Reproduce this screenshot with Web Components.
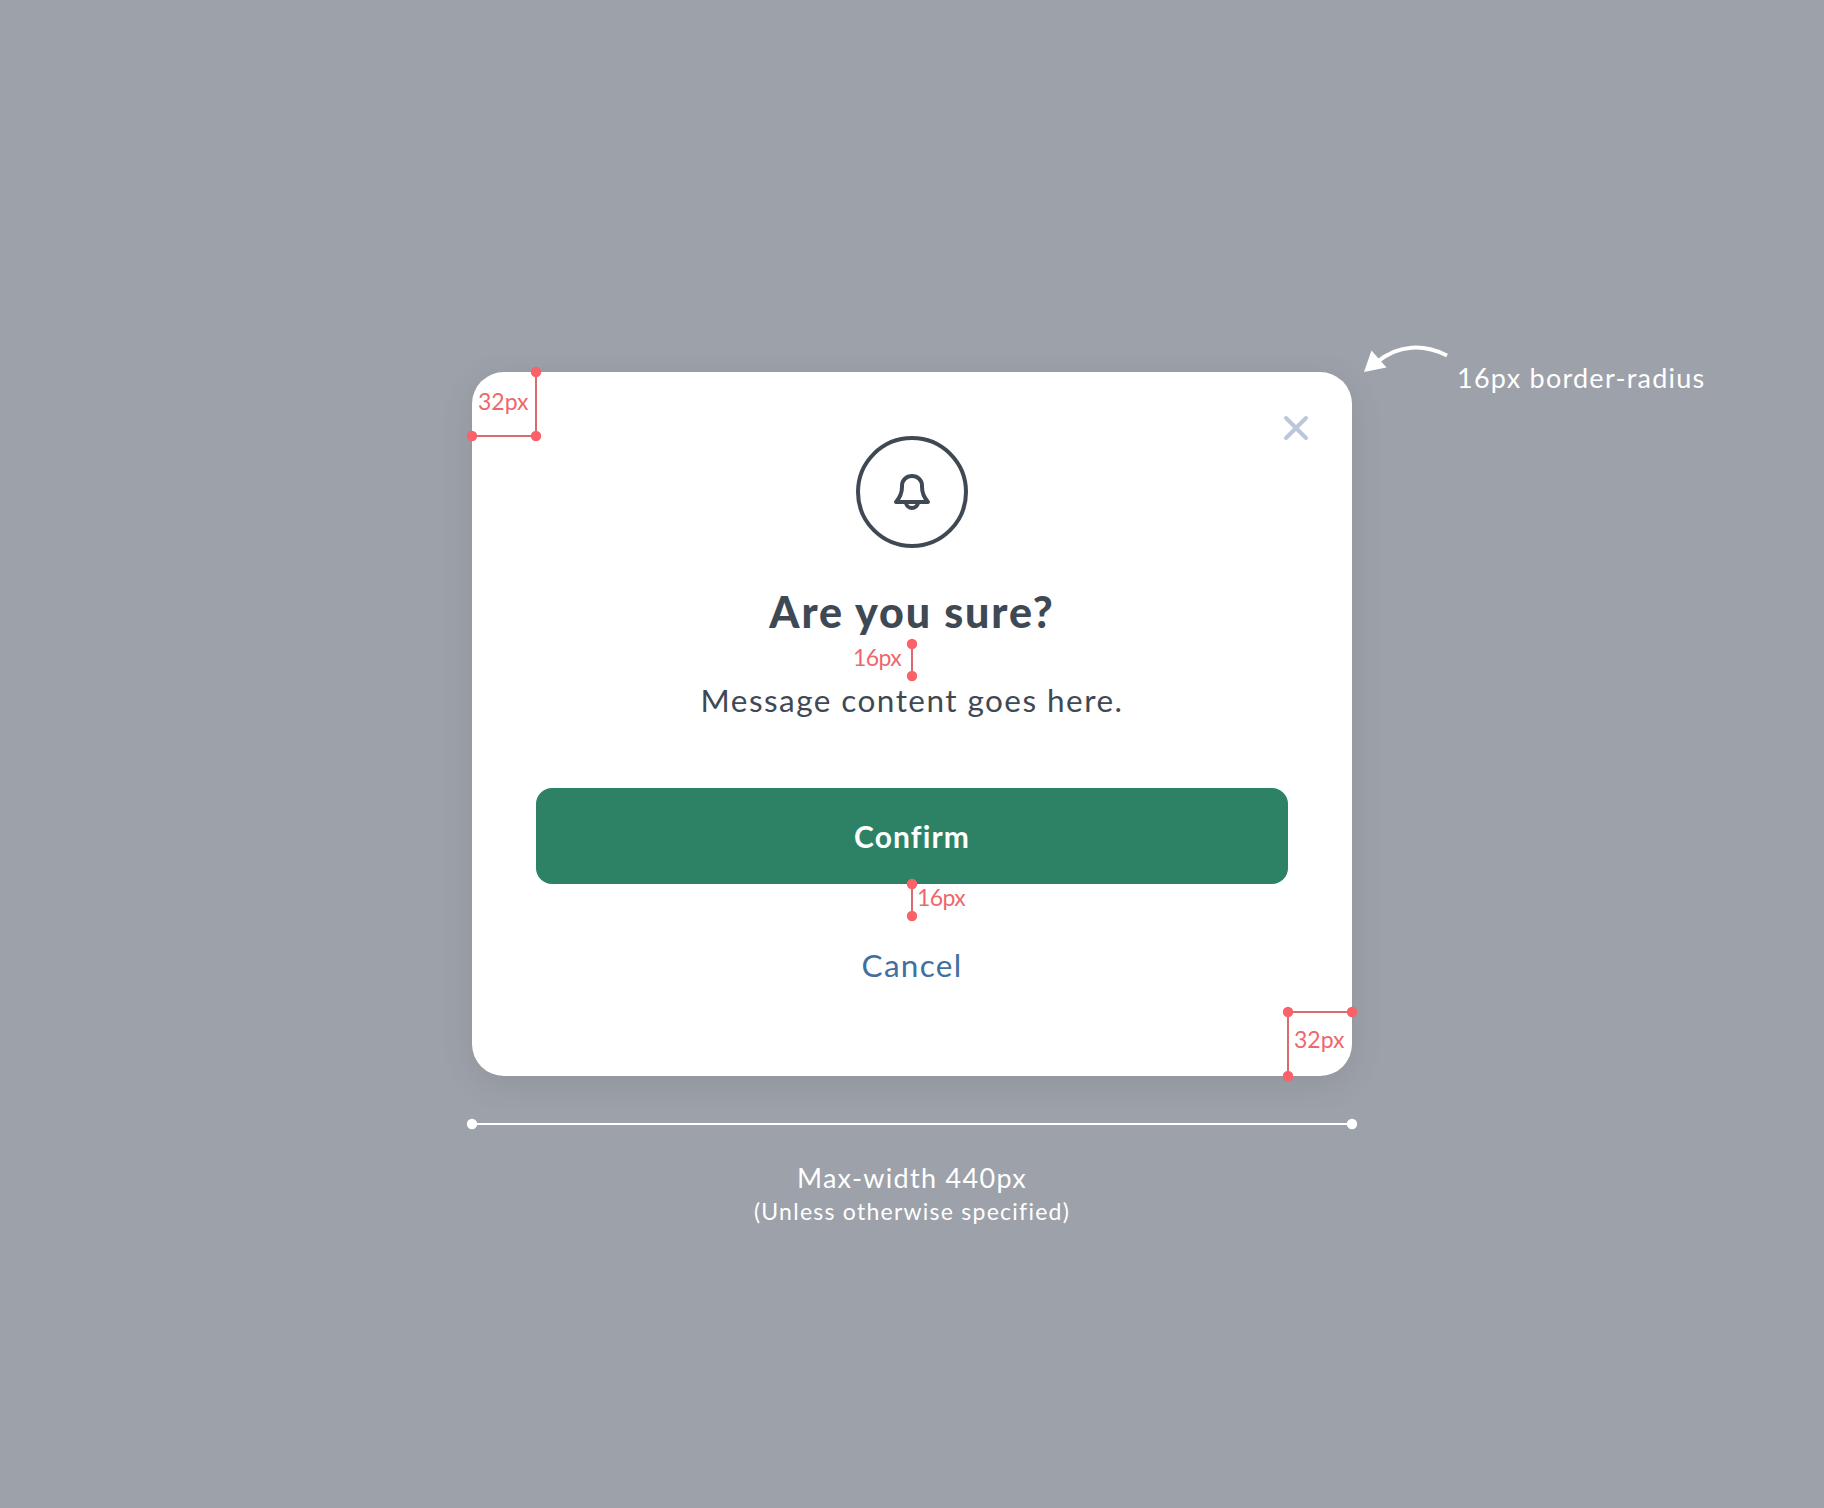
<!DOCTYPE html>
<html lang="en">
<head>
<meta charset="utf-8">
<title>Modal</title>
<style>
  body{
    margin: 0;
    background-color: #9da1a9;
    color: #3f4954;
    font-family: Lato, "Open Sans", sans-serif;
    --ink: #3f4954;
    --green: #2d8265;
    --blue: #41709f;
    --dot: #fa6168;
    --line: #dc6b71;
    --label: #ee676d;
  }
</style>
</head>
<body>
<modal-spec>
  <modal-dialog>
    <bell-icon slot="icon"></bell-icon>
    <span slot="title">Are you sure?</span>
    <span slot="message">Message content goes here.</span>
    <modal-button slot="actions" kind="primary">Confirm</modal-button>
    <modal-button slot="actions" kind="link">Cancel</modal-button>
  </modal-dialog>
  <red-line slot="marks" points="64,0 64,64 0,64" label="32px" lx="6" base="38" style="left:0;top:0"></red-line>
  <red-line slot="marks" points="0,0 0,32" label="16px" lx="-59" base="22" style="left:440px;top:272px;letter-spacing:-.6px"></red-line>
  <red-line slot="marks" points="0,0 0,32" label="16px" lx="5" base="22" style="left:440px;top:512px;letter-spacing:-.6px"></red-line>
  <red-line slot="marks" points="64,0 0,0 0,64" label="32px" lx="6" base="36" style="left:816px;top:640px"></red-line>
  <radius-note slot="marks">16px border-radius</radius-note>
  <width-rule slot="width">
    Max-width 440px
    <span slot="note">(Unless otherwise specified)</span>
  </width-rule>
</modal-spec>
<script>
(function(customElements){
  'use strict';

  class ModalSpec extends HTMLElement{
    constructor(){
      super();
      this.attachShadow({mode: 'open'}).innerHTML = `<style>
        :host{
          display: flex;
          flex-direction: column;
          align-items: center;
          box-sizing: border-box;
          height: 1508px;
          padding-top: 372px;
          overflow: hidden;
        }
        .stage{
          position: relative;
          width: 880px;
        }
        </style>
        <div class="stage"><slot></slot><slot name="marks"></slot></div>
        <slot name="width"></slot>`;
    }
  }

  class ModalDialog extends HTMLElement{
    constructor(){
      super();
      this.attachShadow({mode: 'open'}).innerHTML = `<style>
        :host{
          display: flex;
          flex-direction: column;
          align-items: center;
          box-sizing: border-box;
          height: 704px;
          padding: 64px;
          border-radius: 32px;
          background-color: #fff;
          box-shadow: 0 8px 32px rgba(60, 66, 72, .13);
          position: relative;
        }
        h1{
          margin: 32px 0;
          font-size: 43px;
          line-height: 64px;
          font-weight: 900;
          letter-spacing: 1.9px;
          white-space: nowrap;
        }
        p{
          margin: 0 0 64px;
          font-size: 31.500px;
          line-height: 48px;
          letter-spacing: 1.45px;
          white-space: nowrap;
        }
        .actions{
          display: flex;
          flex-direction: column;
          gap: 32px;
          width: 100%;
        }
        .close{
          position: absolute;
          top: 42px;
          right: 42px;
        }
        </style>
        <svg class="close" width="28" height="28" viewBox="0 0 28 28" fill="none" stroke="#bcc8da" stroke-width="4" stroke-linecap="round">
          <path d="M4 4l20 20M24 4L4 24"/>
        </svg>
        <slot name="icon"></slot>
        <h1><slot name="title"></slot></h1>
        <p><slot name="message"></slot></p>
        <div class="actions"><slot name="actions"></slot></div>`;
    }
  }

  class BellIcon extends HTMLElement{
    constructor(){
      super();
      this.attachShadow({mode: 'open'}).innerHTML = `<style>
        :host{ display: block; width: 112px; height: 112px; }
        svg{ display: block; }
        </style>
        <svg width="112" height="112" viewBox="0 0 112 112" fill="none" stroke="var(--ink)" stroke-width="4" stroke-linejoin="round">
          <circle cx="56" cy="56" r="54"/>
          <path d="M40 66c3.500-4 6-9.500 6-15v-1.500C46 44 50.500 40 56 40s10 4 10 9.500V51c0 5.500 2.500 11 6 15z"/>
          <path d="M50 66.500a6 5.500 0 0 0 12 0"/>
        </svg>`;
    }
  }

  class ModalButton extends HTMLElement{
    constructor(){
      super();
      this.attachShadow({mode: 'open'}).innerHTML = `<style>
        :host{ display: block; }
        button{
          display: block;
          box-sizing: border-box;
          width: 100%;
          height: 96px;
          padding: 2px 0 0;
          border: 0;
          border-radius: 16px;
          background: none;
          font-family: inherit;
          font-size: 31.500px;
          letter-spacing: 1.3px;
          color: var(--blue);
        }
        :host([kind=primary]) button{
          padding-top: 0;
          background-color: var(--green);
          color: #fff;
          font-size: 30px;
          font-weight: 700;
          letter-spacing: 1.1px;
          font-variant-ligatures: none;
        }
        </style>
        <button type="button"><slot></slot></button>`;
    }
  }

  // Measuring line: points are relative to the host, one dot for each
  class RedLine extends HTMLElement{
    constructor(){
      super();
      const points = this.getAttribute('points');
      const dots = points.split(' ').map(p => {
        const [x, y] = p.split(',');
        return `<circle cx="${x}" cy="${y}" r="5.200" fill="var(--dot)"/>`;
      }).join('');

      this.attachShadow({mode: 'open'}).innerHTML = `<style>
        :host{ position: absolute; width: 64px; height: 64px; }
        svg{ display: block; overflow: visible; }
        span{
          position: absolute;
          left: ${this.getAttribute('lx')}px;
          top: ${this.getAttribute('base') - 24}px;
          font-size: 23px;
          line-height: 30px;
          color: var(--label);
        }
        </style>
        <svg width="64" height="64">
          <polyline points="${points}" fill="none" stroke="var(--line)" stroke-width="2"/>${dots}
        </svg>
        <span>${this.getAttribute('label')}</span>`;
    }
  }

  class RadiusNote extends HTMLElement{
    constructor(){
      super();
      this.attachShadow({mode: 'open'}).innerHTML = `<style>
        :host{
          position: absolute;
          left: 890px;
          top: -30px;
          display: flex;
          gap: 7px;
          color: #fff;
          font-size: 27px;
          line-height: 36px;
          letter-spacing: 1.25px;
          white-space: nowrap;
        }
        span{ padding-top: 18px; }
        </style>
        <svg width="88" height="32" viewBox="0 0 88 32">
          <path d="M15 20C37 2 62 2 85 13.500" fill="none" stroke="#fff" stroke-width="4"/>
          <path d="M2 30L9.500 8.500 24.500 25.500z" fill="#fff"/>
        </svg>
        <span><slot></slot></span>`;
    }
  }

  class WidthRule extends HTMLElement{
    constructor(){
      super();
      this.attachShadow({mode: 'open'}).innerHTML = `<style>
        :host{
          display: flex;
          flex-direction: column;
          align-items: center;
          width: 892px;
          margin-top: 42px;
          color: #fff;
          font-size: 27px;
          line-height: 36px;
          letter-spacing: 1.3px;
        }
        svg{ display: block; margin-bottom: 30px; }
        .note{
          font-size: 23px;
          line-height: 30px;
          letter-spacing: 1.25px;
        }
        </style>
        <svg width="892" height="12">
          <path d="M6 6H886" stroke="#fff" stroke-width="2"/>
          <circle cx="6" cy="6" r="5.200" fill="#fff"/>
          <circle cx="886" cy="6" r="5.200" fill="#fff"/>
        </svg>
        <div><slot></slot></div>
        <div class="note"><slot name="note"></slot></div>`;
    }
  }

  customElements.define('modal-spec', ModalSpec);
  customElements.define('modal-dialog', ModalDialog);
  customElements.define('bell-icon', BellIcon);
  customElements.define('modal-button', ModalButton);
  customElements.define('red-line', RedLine);
  customElements.define('radius-note', RadiusNote);
  customElements.define('width-rule', WidthRule);
})(window.customElements);
</script>
</body>
</html>
